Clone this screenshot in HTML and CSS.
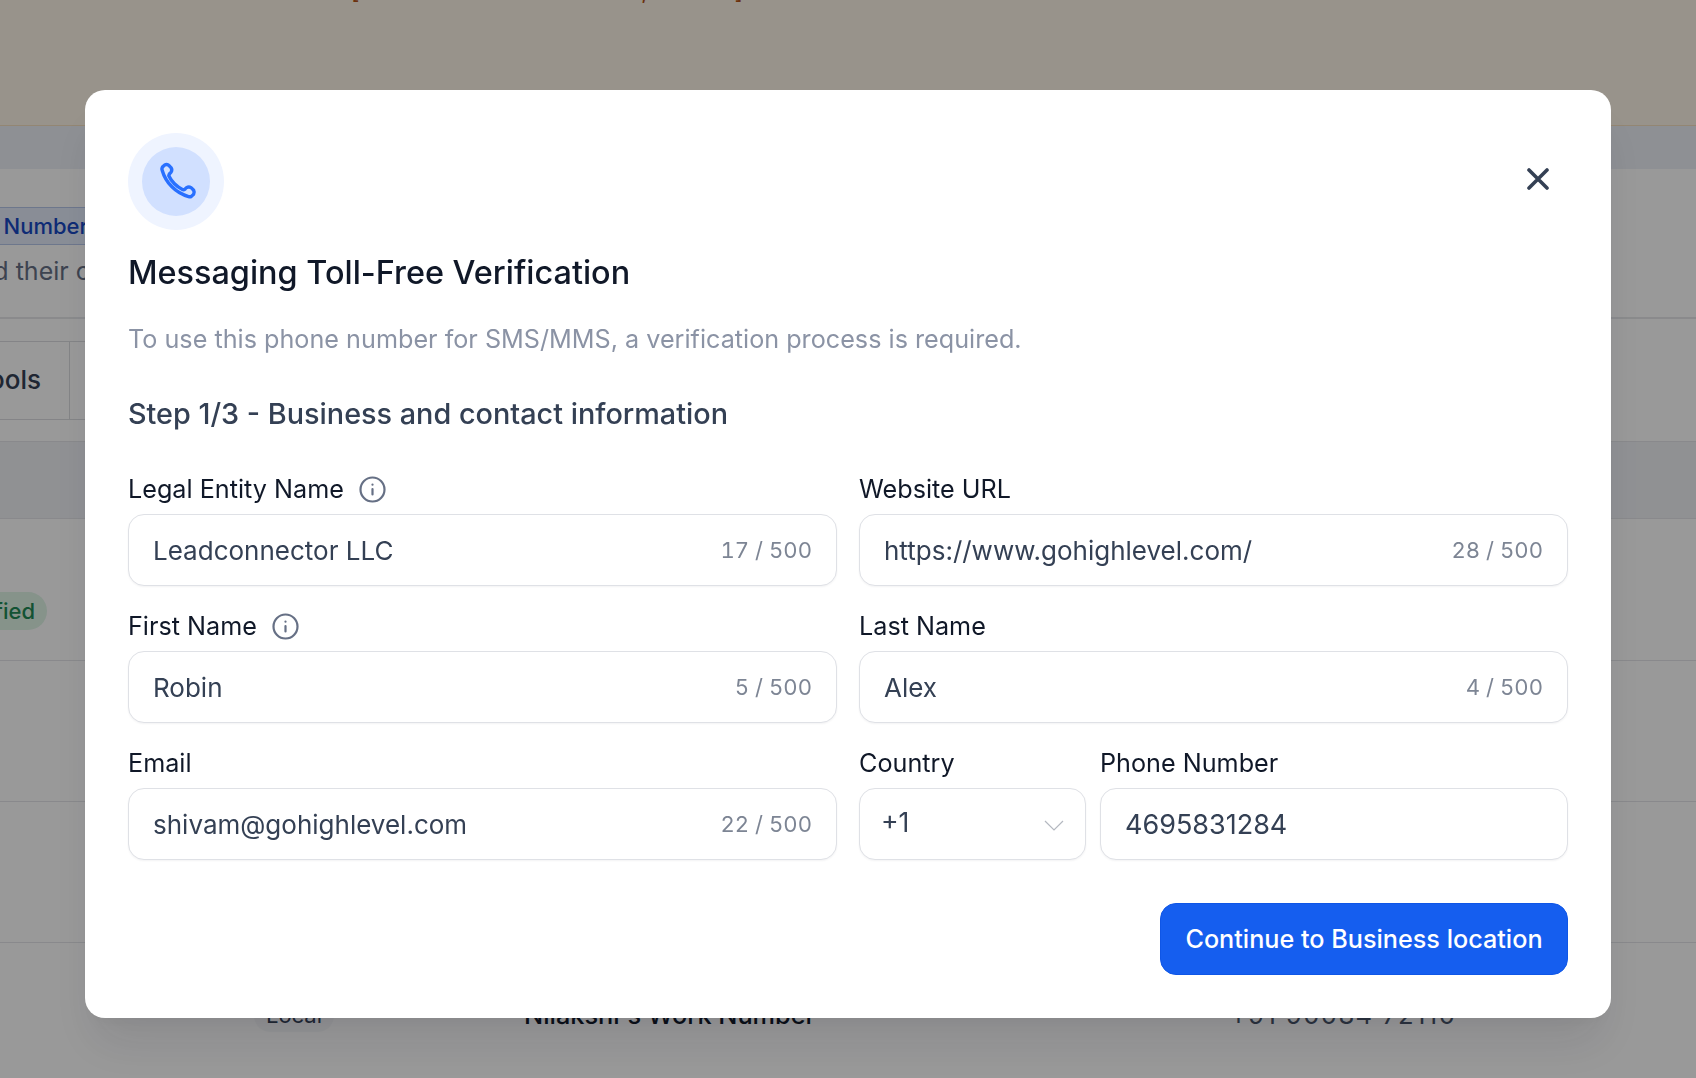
FILE: index.html
```html
<!DOCTYPE html>
<html lang="en">
<head>
    <meta charset="UTF-8">
    <title>Messaging Toll-Free Verification</title>
    <link rel="stylesheet" href="styles.css">
</head>
<body>
<div class="page">
    <div class="banner"><p class="banner_text">Toll-free lines are not sent out [verification is a new item, of note]</p></div>
    <div class="tabs"></div>
    <div class="intro">
        <div class="intro_chip"><span>Phone Number</span></div>
        <div class="intro_desc"><span>and their c</span></div>
    </div>
    <div class="tools">
        <div class="tools_cell"><span>Tools</span></div>
    </div>
    <div class="table_head"></div>
    <div class="row row_first">
        <div class="status_cell"><span class="status">Verified</span></div>
    </div>
    <div class="row"></div>
    <div class="row"></div>
    <div class="row row_last">
        <span class="type_chip">Local</span>
        <span class="line_name">Nilakshi's Work Number</span>
        <span class="line_phone">+91 90084 72110</span>
    </div>
</div>

<div class="overlay">
    <div class="modal">
        <div class="modal_top">
            <div class="phone_badge">
                <svg class="phone_icon" viewBox="0 0 24 24" fill="none" stroke="#2970ff" stroke-width="1.7" stroke-linecap="round" stroke-linejoin="round">
                    <path d="M8.38 8.853a14.603 14.603 0 0 0 2.847 4.01 14.603 14.603 0 0 0 4.01 2.847c.124.06.187.09.265.112.28.082.625.023.862-.147.067-.048.124-.105.239-.219.35-.35.524-.524.7-.639a2 2 0 0 1 2.18 0c.176.115.35.29.7.64l.195.194c.266.266.399.399.471.542a2 2 0 0 1 0 1.805c-.072.143-.205.276-.47.541l-.158.158c-.265.265-.397.398-.578.499-.2.113-.512.194-.742.193-.207 0-.348-.04-.631-.12a19.079 19.079 0 0 1-8.303-4.885 19.078 19.078 0 0 1-4.884-8.303c-.08-.283-.12-.424-.12-.63a1.843 1.843 0 0 1 .193-.743c.101-.18.233-.313.498-.578l.158-.158c.266-.265.398-.398.541-.47a2 2 0 0 1 1.805 0c.143.072.276.205.542.47l.194.195c.35.35.525.525.64.7a2 2 0 0 1 0 2.18c-.115.177-.29.352-.64.701-.114.115-.171.172-.219.239-.17.237-.229.583-.147.862.022.078.052.14.112.265Z"/>
                </svg>
            </div>
            <svg class="close_icon" viewBox="0 0 22 22" fill="none" stroke="#344054" stroke-width="3.6" stroke-linecap="round">
                <path d="M2 2 20 20M20 2 2 20"/>
            </svg>
        </div>
        <h1 class="modal_title">Messaging Toll-Free Verification</h1>
        <p class="modal_sub">To use this phone number for SMS/MMS, a verification process is required.</p>
        <h2 class="step_title">Step 1/3 - Business and contact information</h2>

        <form class="form_grid">
            <div class="field">
                <label class="field_label">Legal Entity Name
                    <svg class="info_icon" viewBox="0 0 27 27" fill="none" stroke="#667085" stroke-width="2.2" stroke-linecap="round"><circle cx="13.5" cy="13.5" r="12"/><path d="M13.5 13v5.5M13.5 8.6v.1"/></svg>
                </label>
                <div class="input_box">
                    <input class="input_text" value="Leadconnector LLC">
                    <span class="input_count">17 / 500</span>
                </div>
            </div>
            <div class="field">
                <label class="field_label">Website URL</label>
                <div class="input_box">
                    <input class="input_text" value="https://www.gohighlevel.com/">
                    <span class="input_count">28 / 500</span>
                </div>
            </div>
            <div class="field">
                <label class="field_label">First Name
                    <svg class="info_icon" viewBox="0 0 27 27" fill="none" stroke="#667085" stroke-width="2.2" stroke-linecap="round"><circle cx="13.5" cy="13.5" r="12"/><path d="M13.5 13v5.5M13.5 8.6v.1"/></svg>
                </label>
                <div class="input_box">
                    <input class="input_text" value="Robin">
                    <span class="input_count">5 / 500</span>
                </div>
            </div>
            <div class="field">
                <label class="field_label">Last Name</label>
                <div class="input_box">
                    <input class="input_text" value="Alex">
                    <span class="input_count">4 / 500</span>
                </div>
            </div>
            <div class="field">
                <label class="field_label">Email</label>
                <div class="input_box">
                    <input class="input_text" value="shivam@gohighlevel.com">
                    <span class="input_count">22 / 500</span>
                </div>
            </div>
            <div class="phone_fields">
                <div class="field">
                    <label class="field_label">Country</label>
                    <div class="input_box select_box">
                        <span class="select_value">+1</span>
                        <svg class="chevron" viewBox="0 0 20 11" fill="none" stroke="#b4b8c0" stroke-width="1.2"><path d="M1 1 10 10 19 1"/></svg>
                    </div>
                </div>
                <div class="field">
                    <label class="field_label">Phone Number</label>
                    <div class="input_box">
                        <input class="input_text input_digits" value="4695831284">
                    </div>
                </div>
            </div>
        </form>

        <div class="modal_foot">
            <button class="primary_btn" type="button">Continue to Business location</button>
        </div>
    </div>
</div>
</body>
</html>
```

FILE: styles.css
```css
* {
    box-sizing: border-box;
}
html, body {
    margin: 0;
    height: 100%;
    overflow: hidden;
}
body {
    background: #fff;
    font-family: "Inter", "Liberation Sans", sans-serif;
}

/* page behind the dialog */
.page {
    height: 1078px;
    overflow: hidden;
}
.banner {
    height: 126px;
    background: #fdf5e8;
    border-bottom: 1px solid #f5dfc0;
    overflow: hidden;
}
.banner_text {
    margin: -23px 0 0 4px;
    font-size: 24px;
    line-height: 28px;
    color: #b4541a;
    white-space: nowrap;
}
.tabs {
    height: 43px;
    background: #edf0f7;
}
.intro {
    height: 150px;
    padding-top: 38px;
    border-bottom: 2px solid #e6e7ea;
}
.intro_chip {
    display: flex;
    justify-content: flex-end;
    align-items: center;
    width: 110px;
    height: 38px;
    padding-right: 21px;
    background: #e4ecfb;
    border: 1px solid #b6c6ea;
    border-left: 0;
    color: #1849c4;
    font-size: 22px;
    font-weight: 500;
    white-space: nowrap;
}
.intro_desc {
    display: flex;
    justify-content: flex-end;
    width: 110px;
    padding-right: 20px;
    margin-top: 9px;
    font-size: 25px;
    line-height: 34px;
    color: #667085;
    white-space: nowrap;
}
.tools {
    width: 300px;
    height: 79px;
    margin-top: 22px;
    border-top: 1px solid #dcdde1;
    border-bottom: 1px solid #dcdde1;
}
.tools_cell {
    display: flex;
    justify-content: flex-end;
    align-items: center;
    width: 70px;
    height: 100%;
    padding: 0 28px 3px 0;
    border-right: 1px solid #dcdde1;
    color: #344054;
    font-size: 26px;
    font-weight: 500;
    white-space: nowrap;
}
.table_head {
    height: 78px;
    margin-top: 21px;
    background: #f0f2f6;
    border-top: 1px solid #e4e5e9;
    border-bottom: 1px solid #e4e5e9;
}
.row {
    height: 141px;
    border-bottom: 1px solid #e4e5e9;
}
.row_first {
    height: 142px;
    padding-top: 73px;
}
.status_cell {
    display: flex;
    justify-content: flex-end;
    width: 47px;
    height: 38px;
}
.status {
    flex: none;
    display: flex;
    align-items: center;
    padding: 0 12px;
    height: 38px;
    border-radius: 19px;
    background: #dff5e7;
    color: #1f8a55;
    font-size: 22px;
    font-weight: 500;
}
.row_last {
    display: flex;
    align-items: flex-start;
    padding: 56px 0 0 254px;
    border-bottom: 0;
}
.type_chip {
    width: 80px;
    height: 33px;
    border-radius: 17px;
    background: #f7f8fa;
    text-align: center;
    font-size: 22px;
    line-height: 32px;
    color: #344054;
}
.line_name {
    width: 283px;
    margin-left: 190px;
    font-size: 25.3px;
    line-height: 32px;
    font-weight: 500;
    color: #101828;
    white-space: nowrap;
}
.line_phone {
    margin-left: 423px;
    font-size: 25.6px;
    line-height: 32px;
    letter-spacing: 1.4px;
    color: #475467;
    white-space: nowrap;
}

/* dialog */
.overlay {
    position: fixed;
    inset: 0;
    display: flex;
    justify-content: center;
    align-items: flex-start;
    padding-top: 90px;
    background: rgba(0, 0, 0, 0.4);
}
.modal {
    width: 1526px;
    height: 928px;
    padding: 43px 43px 0;
    background: #fff;
    border-radius: 20px;
    box-shadow: 0 32px 48px -8px rgba(16, 24, 40, 0.1), 0 12px 16px -6px rgba(16, 24, 40, 0.04);
}
.modal_top {
    display: flex;
    justify-content: space-between;
    align-items: flex-start;
}
.phone_badge {
    display: flex;
    justify-content: center;
    align-items: center;
    width: 96px;
    height: 97px;
    border-radius: 50%;
    background: #d1e0ff;
    border: 14px solid #eff4ff;
}
.phone_icon {
    flex: none;
    width: 48px;
    height: 48px;
}
.close_icon {
    width: 22px;
    height: 22px;
    margin: 35px 19px 0 0;
}
.modal_title {
    margin: 19px 0 0;
    font-size: 32.4px;
    line-height: 48px;
    font-weight: 500;
    color: #101828;
}
.modal_sub {
    margin: 22px 0 0;
    font-size: 25.2px;
    line-height: 40px;
    color: #8b93a5;
}
.step_title {
    margin: 33px 0 0;
    font-size: 28.8px;
    line-height: 44px;
    font-weight: 500;
    color: #344054;
}
.form_grid {
    display: grid;
    grid-template-columns: 709px 709px;
    column-gap: 22px;
    row-gap: 20px;
    margin-top: 33px;
}
.field {
    min-width: 0;
}
.field_label {
    display: flex;
    align-items: center;
    gap: 15px;
    height: 40px;
    margin-bottom: 5px;
    font-size: 25.2px;
    color: #101828;
}
.info_icon {
    width: 27px;
    height: 27px;
}
.input_box {
    display: flex;
    align-items: center;
    height: 72px;
    padding: 0 24px;
    background: #fff;
    border: 1px solid #dfe1e6;
    border-radius: 16px;
    box-shadow: 0 1px 2px rgba(16, 24, 40, 0.05);
}
.input_text {
    flex: 1;
    min-width: 0;
    padding: 0;
    border: 0;
    outline: 0;
    background: transparent;
    font-family: inherit;
    font-size: 26px;
    color: #344054;
}
.input_digits {
    font-size: 27px;
}
.input_count {
    flex: none;
    font-size: 22.1px;
    font-variant-numeric: tabular-nums;
    color: #7d8594;
}
.phone_fields {
    display: grid;
    grid-template-columns: 227px 468px;
    column-gap: 14px;
}
.select_box {
    justify-content: space-between;
    padding: 0 21px;
}
.select_value {
    margin-top: -4px;
    font-size: 26.6px;
    color: #344054;
}
.chevron {
    width: 20px;
    height: 11px;
    margin-top: 2px;
}
.modal_foot {
    display: flex;
    justify-content: flex-end;
    margin-top: 43px;
}
.primary_btn {
    width: 408px;
    height: 72px;
    padding: 0;
    background: #155eef;
    border: 1px solid #0f56e6;
    border-radius: 16px;
    font-family: inherit;
    font-size: 25.2px;
    font-weight: 500;
    color: #fff;
}
```
